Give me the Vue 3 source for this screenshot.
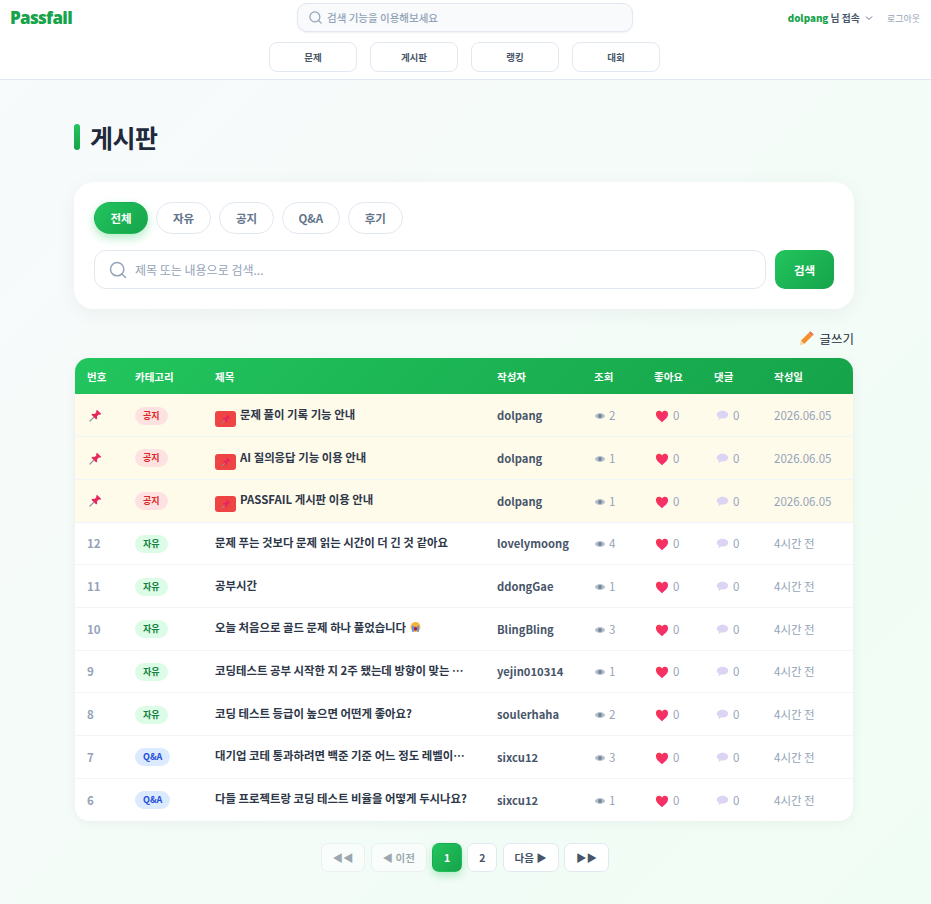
<script setup>
const tabs = ['전체', '자유', '공지', 'Q&A', '후기']
const navs = ['문제', '게시판', '랭킹', '대회']

const rows = [
  { no: '', cat: '공지', type: 'notice', title: '문제 풀이 기록 기능 안내', user: 'dolpang', views: 2, date: '2026.06.05' },
  { no: '', cat: '공지', type: 'notice', title: 'AI 질의응답 기능 이용 안내', user: 'dolpang', views: 1, date: '2026.06.05' },
  { no: '', cat: '공지', type: 'notice', title: 'PASSFAIL 게시판 이용 안내', user: 'dolpang', views: 1, date: '2026.06.05' },
  { no: 12, cat: '자유', type: 'free', title: '문제 푸는 것보다 문제 읽는 시간이 더 긴 것 같아요', user: 'lovelymoong', views: 4, date: '4시간 전' },
  { no: 11, cat: '자유', type: 'free', title: '공부시간', user: 'ddongGae', views: 1, date: '4시간 전' },
  { no: 10, cat: '자유', type: 'free', title: '오늘 처음으로 골드 문제 하나 풀었습니다', emoji: true, user: 'BlingBling', views: 3, date: '4시간 전' },
  { no: 9, cat: '자유', type: 'free', title: '코딩테스트 공부 시작한 지 2주 됐는데 방향이 맞는 건지 모르겠어요', user: 'yejin010314', views: 1, date: '4시간 전' },
  { no: 8, cat: '자유', type: 'free', title: '코딩 테스트 등급이 높으면 어떤게 좋아요?', user: 'soulerhaha', views: 2, date: '4시간 전' },
  { no: 7, cat: 'Q&A', type: 'qna', title: '대기업 코테 통과하려면 백준 기준 어느 정도 레벨이어야 하나요?', user: 'sixcu12', views: 3, date: '4시간 전' },
  { no: 6, cat: 'Q&A', type: 'qna', title: '다들 프로젝트랑 코딩 테스트 비율을 어떻게 두시나요?', user: 'sixcu12', views: 1, date: '4시간 전' }
]
</script>

<template>
  <div class="page">
    <svg class="defs" width="0" height="0">
      <defs>
        <linearGradient id="heartFill" x1="0" y1="0" x2="1" y2="1">
          <stop offset="0" stop-color="#f4364c" />
          <stop offset="1" stop-color="#f52c7c" />
        </linearGradient>
      </defs>
      <symbol id="pin" viewBox="0 0 16 16">
        <path d="M9.800 .8 15.200 6.200 13.600 7.200 12 6.900 9.800 9.100 10.100 11.800 8.800 13 3 7.200 4.200 5.900 6.900 6.200 9.100 4 8.800 2.400Z" fill="#e8265e" />
        <path d="M5.800 10.200 1.200 14.800" stroke="#8a94a3" stroke-width="1.400" stroke-linecap="round" />
      </symbol>
      <symbol id="eye" viewBox="0 0 16 16">
        <path d="M1 8c2-3 4.300-4 7-4s5 1 7 4c-2 3-4.300 4-7 4S3 11 1 8Z" fill="#b4bfcc" />
        <circle cx="8" cy="8" r="2.600" fill="#76879b" />
      </symbol>
      <symbol id="heart" viewBox="0 0 16 16">
        <path d="M8 15C4 12 1 9.300 1 5.800 1 3.400 2.800 2 4.600 2 6 2 7.300 2.700 8 4c.7-1.300 2-2 3.400-2C13.200 2 15 3.400 15 5.800 15 9.300 12 12 8 15Z" fill="url(#heartFill)" />
      </symbol>
      <symbol id="bubble" viewBox="0 0 16 16">
        <path d="M8 2.200c3.900 0 7 2.100 7 4.800S11.900 11.800 8 11.800c-.7 0-1.400-.1-2-.2L3 14l.7-3.300C2 9.800 1 8.500 1 7 1 4.300 4.100 2.200 8 2.200Z" fill="#dcd4f3" />
      </symbol>
      <symbol id="pencil" viewBox="0 0 16 16">
        <path d="M11.400 1.300 14.700 4.600 13.200 6.100 9.900 2.800Z" fill="#ef6a5a" />
        <path d="M9.900 2.800 13.200 6.100 5.200 14.100 1.900 10.800Z" fill="#f4902b" />
        <path d="M1.900 10.800 5.200 14.100 .8 15.200Z" fill="#f3d3a8" />
      </symbol>
      <symbol id="cry" viewBox="0 0 16 16">
        <circle cx="8" cy="8" r="7.200" fill="#f5b53c" />
        <path d="M3 6h2.600v9H3ZM10.400 6H13v9h-2.600Z" fill="#5b8fe8" />
        <ellipse cx="8" cy="10.500" rx="2.400" ry="3" fill="#a3244f" />
      </symbol>
    </svg>

    <header class="header">
      <div class="top-row">
        <div class="logo">Passfail</div>
        <div class="top-search">
          <svg class="search-icon" width="15" height="15" viewBox="0 0 24 24" fill="none" stroke="#94a3b8" stroke-width="2" stroke-linecap="round">
            <circle cx="11" cy="11" r="8" />
            <path d="M21 21l-4.300-4.300" />
          </svg>
          <span>검색 기능을 이용해보세요</span>
        </div>
        <div class="user-box">
          <span class="user-name"><b>dolpang</b> 님 접속</span>
          <svg width="8" height="6" viewBox="0 0 8 6" fill="none" stroke="#64748b" stroke-width="1">
            <path d="M1 1.500 4 4.500 7 1.500" />
          </svg>
          <span class="logout">로그아웃</span>
        </div>
      </div>
      <nav class="nav">
        <a v-for="n in navs" :key="n" class="nav-item">{{ n }}</a>
      </nav>
    </header>

    <main class="main">
      <h1 class="title">게시판</h1>

      <section class="filter-card">
        <div class="tabs">
          <button v-for="(t, i) in tabs" :key="t" class="tab" :class="{ active: i === 0 }">{{ t }}</button>
        </div>
        <div class="search-row">
          <div class="search-box">
            <svg width="20" height="20" viewBox="0 0 24 24" fill="none" stroke="#94a3b8" stroke-width="1.800" stroke-linecap="round">
              <circle cx="11" cy="11" r="8" />
              <path d="M21 21l-4.300-4.300" />
            </svg>
            <span>제목 또는 내용으로 검색...</span>
          </div>
          <button class="search-btn">검색</button>
        </div>
      </section>

      <div class="write-row">
        <a class="write">
          <svg width="16" height="16"><use href="#pencil" /></svg>
          글쓰기
        </a>
      </div>

      <div class="table-card">
        <table>
          <colgroup>
            <col style="width: 48px" />
            <col style="width: 80px" />
            <col style="width: 282px" />
            <col style="width: 97px" />
            <col style="width: 60px" />
            <col style="width: 60px" />
            <col style="width: 60px" />
            <col />
          </colgroup>
          <thead>
            <tr>
              <th>번호</th>
              <th>카테고리</th>
              <th>제목</th>
              <th>작성자</th>
              <th>조회</th>
              <th>좋아요</th>
              <th>댓글</th>
              <th>작성일</th>
            </tr>
          </thead>
          <tbody>
            <tr v-for="(r, i) in rows" :key="i" :class="{ notice: r.type === 'notice' }">
              <td class="no">
                <svg v-if="r.type === 'notice'" class="pin" width="13" height="13"><use href="#pin" /></svg>
                <template v-else>{{ r.no }}</template>
              </td>
              <td><span class="badge" :class="r.type">{{ r.cat }}</span></td>
              <td>
                <div class="post-title">
                  <span v-if="r.type === 'notice'" class="pin-tag"><svg width="10" height="10"><use href="#pin" /></svg></span>
                  <span class="post-text">{{ r.title }}</span>
                  <svg v-if="r.emoji" class="emoji" width="11" height="12"><use href="#cry" /></svg>
                </div>
              </td>
              <td class="author">{{ r.user }}</td>
              <td class="stat view"><svg width="12" height="12"><use href="#eye" /></svg>{{ r.views }}</td>
              <td class="stat like"><svg width="14" height="14"><use href="#heart" /></svg>0</td>
              <td class="stat reply"><svg width="13" height="13"><use href="#bubble" /></svg>0</td>
              <td class="date">{{ r.date }}</td>
            </tr>
          </tbody>
        </table>
      </div>

      <div class="pager">
        <button class="pg wide off">◀◀</button>
        <button class="pg mid off">◀ 이전</button>
        <button class="pg num current">1</button>
        <button class="pg num">2</button>
        <button class="pg mid">다음 ▶</button>
        <button class="pg wide">▶▶</button>
      </div>
    </main>
  </div>
</template>

<style>
html, body {
  margin: 0;
}
</style>

<style scoped>
.page {
  min-height: 904px;
  background: linear-gradient(135deg, #f8fafc 0%, #f0fdf4 100%);
  font-family: "Noto Sans CJK KR", "Noto Sans", sans-serif;
  color: #1e293b;
}

.defs {
  position: absolute;
}

.header {
  height: 79px;
  background: #fff;
  border-bottom: 1px solid #e2e8f0;
}

.top-row {
  display: grid;
  grid-template-columns: 1fr 336px 1fr;
  padding: 3px 11px 0 10px;
  height: 39px;
  box-sizing: border-box;
}

.logo {
  font-family: "Noto Sans", sans-serif;
  font-size: 17px;
  font-weight: 900;
  letter-spacing: -0.7px;
  color: #16a34a;
  line-height: 30px;
}

.top-search {
  height: 29px;
  box-sizing: border-box;
  display: flex;
  align-items: center;
  gap: 4px;
  padding: 0 10px;
  background: #f8fafc;
  border: 1px solid #e2e8f0;
  border-radius: 10px;
  box-shadow: 0 1px 2px rgba(15, 23, 42, 0.06);
  font-size: 10.5px;
  font-weight: 500;
  color: #94a3b8;
}

.user-box {
  display: flex;
  justify-content: flex-end;
  align-items: center;
  height: 30px;
  gap: 5px;
  font-size: 9.8px;
  font-weight: 700;
  color: #475569;
}

.user-name b {
  color: #16a34a;
}

.logout {
  margin-left: 9px;
  font-size: 9px;
  font-weight: 400;
  color: #94a3b8;
}

.nav {
  display: flex;
  justify-content: center;
  gap: 13px;
  padding-right: 2px;
  margin-top: 3px;
}

.nav-item {
  width: 88px;
  height: 30px;
  box-sizing: border-box;
  display: flex;
  align-items: center;
  justify-content: center;
  border: 1px solid #e2e8f0;
  border-radius: 8px;
  background: #fff;
  font-size: 9.5px;
  font-weight: 700;
  color: #475569;
}

.main {
  width: 780px;
  margin-left: 74px;
  padding-top: 44px;
  padding-bottom: 32px;
}

.title {
  display: flex;
  align-items: center;
  gap: 10px;
  margin: 0 0 32px;
  height: 26px;
  font-size: 25px;
  font-weight: 700;
  letter-spacing: -0.5px;
  color: #1e293b;
}

.title::before {
  content: '';
  width: 6px;
  height: 26px;
  border-radius: 3px;
  background: linear-gradient(180deg, #22c55e, #16a34a);
}

.filter-card {
  background: #fff;
  border-radius: 20px;
  padding: 20px;
  box-shadow: 0 4px 20px rgba(15, 23, 42, 0.05);
}

.tabs {
  display: flex;
  gap: 8px;
  margin-bottom: 16px;
}

.tab {
  height: 32px;
  padding: 0 15.500px;
  min-width: 55px;
  border: 1px solid #e2e8f0;
  border-radius: 16px;
  background: #fff;
  font: 700 11.5px "Noto Sans CJK KR", "Noto Sans", sans-serif;
  color: #64748b;
}

.tab.active {
  min-width: 54px;
  padding: 0 15px;
  border-color: transparent;
  background: linear-gradient(135deg, #22c55e, #16a34a);
  box-shadow: 0 4px 10px rgba(34, 197, 94, 0.35);
  color: #fff;
}

.search-row {
  display: flex;
  gap: 9px;
}

.search-box {
  flex: 1;
  height: 39px;
  box-sizing: border-box;
  display: flex;
  align-items: center;
  gap: 7px;
  padding: 0 13px;
  border: 1px solid #e2e8f0;
  border-radius: 12px;
  background: #fff;
  font-size: 12px;
  color: #94a3b8;
}

.search-btn {
  width: 59px;
  height: 39px;
  border: 0;
  border-radius: 10px;
  background: linear-gradient(135deg, #22c55e, #16a34a);
  font: 700 11.5px "Noto Sans CJK KR", "Noto Sans", sans-serif;
  color: #fff;
}

.write-row {
  display: flex;
  justify-content: flex-end;
  margin: 19px 0 10px;
}

.write {
  display: flex;
  align-items: center;
  gap: 4px;
  height: 20px;
  font-size: 12.5px;
  color: #1e293b;
}

.table-card {
  width: 778px;
  background: #fff;
  border-radius: 14px;
  overflow: hidden;
  box-shadow: 0 2px 12px rgba(15, 23, 42, 0.05);
  margin-left: 1px;
}

table {
  width: 100%;
  table-layout: fixed;
  border-collapse: collapse;
}

thead tr {
  height: 36px;
  background: linear-gradient(135deg, #22c55e, #16a34a);
}

th {
  padding: 0 12px;
  text-align: left;
  font-size: 10.5px;
  font-weight: 700;
  color: #fff;
}

tbody tr {
  height: 42.700px;
  border-bottom: 1px solid #f1f5f9;
}

tbody tr:last-child {
  border-bottom: 0;
}

tbody tr.notice {
  background: #fffbeb;
}

td {
  padding: 0 12px;
  font-size: 11.5px;
  white-space: nowrap;
}

.no {
  font-weight: 700;
  color: #94a3b8;
}

.pin {
  display: block;
  margin-left: 2px;
}

.badge {
  display: inline-block;
  height: 18px;
  line-height: 18px;
  padding: 0 8px;
  border-radius: 9px;
  font-size: 9px;
  font-weight: 700;
  vertical-align: middle;
}

.badge.notice {
  background: #fee2e2;
  color: #dc2626;
}

.badge.free {
  background: #dcfce7;
  color: #15803d;
}

.badge.qna {
  background: #dbeafe;
  color: #1d4ed8;
}

.post-title {
  display: flex;
  align-items: center;
  height: 22px;
  margin-top: -3px;
}

.post-text {
  max-width: 256px;
  overflow: hidden;
  text-overflow: ellipsis;
  font-size: 11.4px;
  font-weight: 700;
  color: #2d3748;
}

.pin-tag {
  width: 21px;
  height: 16px;
  margin-right: 4px;
  position: relative;
  top: 5px;
  display: flex;
  align-items: center;
  justify-content: center;
  border-radius: 3px;
  background: #ef4444;
}

.emoji {
  margin-left: 4px;
}

.author {
  font-size: 11.2px;
  font-weight: 700;
  color: #475569;
}

.stat {
  color: #94a3b8;
}

.stat svg {
  vertical-align: -2px;
}

.view svg {
  margin-right: 3px;
}

.like svg {
  margin: 0 4px 0 1px;
  vertical-align: -3px;
}

.reply svg {
  margin: 0 4px 0 2px;
}

.date {
  color: #94a3b8;
}

.pager {
  display: flex;
  justify-content: center;
  gap: 5.600px;
  margin-top: 22px;
  padding-left: 1.400px;
}

.pg {
  height: 29px;
  border: 1px solid #e2e8f0;
  border-radius: 7px;
  background: #fff;
  padding: 0;
  font: 700 10.5px "Noto Sans CJK KR", "Noto Sans", sans-serif;
  color: #475569;
}

.pg.wide {
  width: 44.400px;
}

.pg.mid {
  width: 56px;
}

.pg.num {
  width: 29.600px;
}

.pg.off {
  opacity: 0.5;
}

.pg.current {
  border-color: transparent;
  background: linear-gradient(135deg, #22c55e, #16a34a);
  box-shadow: 0 4px 8px rgba(34, 197, 94, 0.3);
  color: #fff;
}
</style>
